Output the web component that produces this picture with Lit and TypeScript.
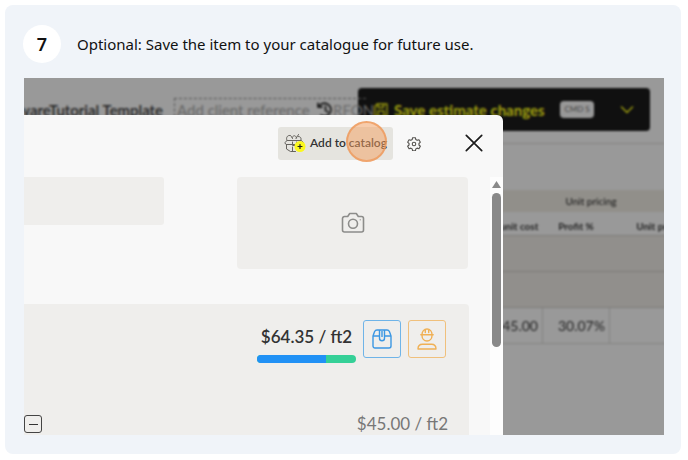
import { LitElement, html, css } from "lit";
import { customElement, property } from "lit/decorators.js";
import { styleMap } from "lit/directives/style-map.js";

const catalogIcon = html`<svg class="icon" width="22" height="20" viewBox="0 0 22 20" fill="none" stroke="#66635e" stroke-width="1" stroke-linejoin="round" stroke-linecap="round" aria-hidden="true">
  <path d="M3 7.500C1.500 5 3.500 2 6 2.500c1.500.3 2 1.500 2.500 3M8 4.500c2-3 4-2 4.500.5M12 5.500l2.500-4M14.500 3.500c2 0 3 1.500 2.500 3.500"/>
  <path d="M3.500 7.500h14l2 2.500-1 1.500H2l-1-1.500z M2.500 11.500v4.500l4 2.500h5 M8.500 9v3.500h4V9 M8.500 14v4"/>
  <circle cx="16" cy="13.500" r="5.500" fill="#fbf81e" stroke="none"/>
  <path d="M16 11.500v4M14 13.500h4" stroke="#222" stroke-width="1.200"/>
</svg>`;

const gearIcon = html`<svg class="icon" width="14" height="14" viewBox="0 0 24 24" fill="none" stroke="#55534f" stroke-width="1.900" stroke-linejoin="round" aria-hidden="true">
  <path d="M9.600 1.500h4.800l.7 3.200 2.300 1.300 3.100-1 2.400 4.200-2.400 2.200v2.600l2.400 2.200-2.400 4.200-3.100-1-2.300 1.300-.7 3.200H9.600l-.7-3.200-2.300-1.300-3.100 1-2.400-4.200 2.400-2.200v-2.600L1.100 9.200 3.500 5l3.100 1 2.300-1.300z" transform="translate(0 -.3)"/>
  <circle cx="12" cy="12" r="3"/>
</svg>`;

const closeIcon = html`<svg class="icon" width="18" height="18" viewBox="0 0 18 18" stroke="#1c1c1c" stroke-width="1.700" stroke-linecap="round" aria-hidden="true">
  <path d="M1.300 1.300l15.400 15.400M16.700 1.300L1.300 16.700"/>
</svg>`;

const cameraIcon = html`<svg class="icon" width="24" height="22" viewBox="0 0 24 22" fill="none" stroke="#8c8c8a" stroke-width="1.600" stroke-linejoin="round" aria-hidden="true">
  <path d="M3.500 4.500h3.200l2-3h6.600l2 3h3.200a2 2 0 0 1 2 2v11.500a2 2 0 0 1-2 2h-17a2 2 0 0 1-2-2V6.500a2 2 0 0 1 2-2z"/>
  <circle cx="12" cy="11.800" r="4.500"/>
  <path d="M18.800 7.700h.8"/>
</svg>`;

const boxIcon = html`<svg class="icon" width="20" height="20" viewBox="0 0 20 20" fill="none" stroke="#3b97e3" stroke-width="1.400" stroke-linejoin="round" aria-hidden="true">
  <path d="M5 1h10c1.500 0 2 .6 2.500 1.700L19 7v10a2 2 0 0 1-2 2H3a2 2 0 0 1-2-2V7l1.500-4.300C3 1.600 3.500 1 5 1z"/>
  <path d="M1 7h6.500M12.500 7H19M7.500 1v8.300a2.500 2.500 0 0 0 5 0V1M10 2v6"/>
</svg>`;

const workerIcon = html`<svg class="icon" width="20" height="22" viewBox="0 0 20 22" fill="none" stroke="#f0b054" stroke-width="1.400" stroke-linejoin="round" stroke-linecap="round" aria-hidden="true">
  <path d="M3.800 6.800h12.400M5 6.500C5 3.500 7 1 10 1s5 2.500 5 5.500M8.300 1.500v3M11.700 1.500v3M5 7.500c0 3 2 5.500 5 5.500s5-2.500 5-5.500"/>
  <path d="M1 21c0-3 1.800-4.800 4.500-4.800h9c2.700 0 4.500 1.800 4.500 4.800z"/>
</svg>`;

const saveIcon = html`<svg class="icon" width="14" height="14" viewBox="0 0 14 14" fill="none" stroke="#9a9a10" stroke-width="1.400" stroke-linejoin="round" aria-hidden="true">
  <path d="M1 3.500L3 1h10v12H1zM4 1v3.500h5.500V1M4 13V8h6v5"/>
</svg>`;

const historyIcon = html`<svg class="icon" width="16" height="16" viewBox="0 0 16 16" fill="none" stroke="#1c1c1c" stroke-width="1.800" stroke-linejoin="round" stroke-linecap="round" aria-hidden="true">
  <path d="M1 1.500V5h3.800M1.500 5A6.500 6.500 0 1 1 4 13.300M8.500 4.500v4l2.500 1.500"/>
</svg>`;

const chevronIcon = html`<svg class="icon" width="14" height="8" viewBox="0 0 14 8" fill="none" stroke="#9a9a10" stroke-width="1.500" stroke-linecap="round" stroke-linejoin="round" aria-hidden="true">
  <path d="M1.500 1L7 6.500 12.500 1"/>
</svg>`;

@customElement("estimate-page")
export class EstimatePage extends LitElement {
  static styles = css`
    :host { display: block; background: #999; color: #222; font-family: Lato, "Open Sans", sans-serif; }
    .icon { display: block; flex: none; }
    .bar { display: flex; align-items: center; height: 66px; box-sizing: border-box; padding: 0 14px 2px 0; border-bottom: 1px solid #858380; }
    .name { display: flex; justify-content: flex-end; width: 139px; flex: none; margin: 0 11px 0 0; overflow: hidden; white-space: nowrap; font-size: 15px; line-height: 20px; font-weight: 600; }
    .ref { display: flex; align-items: center; flex: 1 1 auto; min-width: 0; height: 24px; box-sizing: border-box; border: 1px dashed #555; border-right: 0; position: relative; z-index: 1; }
    .ref input { width: 142px; flex: none; box-sizing: border-box; border: 0; padding: 0 0 0 2px; background: none; font: 15px/20px Lato, sans-serif; color: #666; }
    .ref input::placeholder { color: #666; opacity: 1; }
    .code { font-size: 15px; line-height: 20px; color: #6c6c6c; }
    .save { display: flex; align-items: center; width: 292px; flex: none; height: 43px; box-sizing: border-box; margin-left: -8px; padding: 0 16px; border: 0; border-radius: 4px; background: #101010; color: #a3a310; font: 700 15px/20px Lato, sans-serif; white-space: nowrap; }
    .label { margin-left: 6px; }
    .save kbd { margin-left: auto; width: 34px; height: 17px; border-radius: 4px; background: #989898; color: #444; font: 8px/17px Lato, sans-serif; text-align: center; }
    .more { margin-left: 26px; display: flex; }
    table { width: calc(100% + 43px); margin-top: 46px; table-layout: fixed; border-collapse: collapse; white-space: nowrap; }
    th, td { box-sizing: border-box; padding: 0; }
    .cost { width: 67px; }
    .price { width: 97px; }
    .group th { height: 22px; background: #918f8a; font-size: 10px; font-weight: 400; color: #111; }
    .heads th { height: 23px; padding-top: 5px; font-size: 10px; font-weight: 700; border-bottom: 1px solid #7d7b78; }
    .heads .right { text-align: right; padding-right: 4px; }
    .band td { height: 36px; background: #918f8c; border-bottom: 1px solid #7d7b78; }
    .values td { height: 36px; text-align: right; padding-right: 4px; font-size: 14px; border: 1px solid #838381; }
  `;
  render() {
    return html`
      <header class="bar">
        <h2 class="name">wareTutorial Template</h2>
        <div class="ref">
          <input aria-label="Client reference" placeholder="Add client reference" />
          ${historyIcon}<span class="code">RFON</span>
        </div>
        <button class="save" type="button">
          ${saveIcon}<span class="label">Save estimate changes</span><kbd>CMD S</kbd><span class="more">${chevronIcon}</span>
        </button>
      </header>
      <table>
        <colgroup><col /><col class="cost" /><col class="cost" /><col class="price" /></colgroup>
        <thead>
          <tr class="group"><th></th><th colspan="3">Unit pricing</th></tr>
          <tr class="heads"><th></th><th class="right">unit cost</th><th>Profit %</th><th>Unit price</th></tr>
        </thead>
        <tbody>
          <tr class="band"><td colspan="4"></td></tr>
          <tr class="band"><td colspan="4"></td></tr>
          <tr class="values"><td></td><td>45.00</td><td>30.07%</td><td></td></tr>
        </tbody>
      </table>
    `;
  }
}

@customElement("item-dialog")
export class ItemDialog extends LitElement {
  @property({ type: Number }) materialShare = 70;

  static styles = css`
    :host { display: flex; flex-direction: column; overflow: hidden; background: #f8f8f8; border-top-right-radius: 6px; color: #333; font-family: Lato, "Open Sans", sans-serif; }
    button { display: flex; align-items: center; justify-content: center; padding: 0; border: 0; background: none; color: inherit; font-family: inherit; }
    .icon { display: block; flex: none; }
    .tools { display: flex; align-items: center; justify-content: flex-end; flex: none; height: 62px; box-sizing: border-box; padding: 0 20px 6px 0; }
    .add { position: relative; gap: 4px; width: 115px; height: 33px; border-radius: 3px; background: #e5e4df; font-size: 12px; line-height: 16px; font-weight: 600; white-space: nowrap; }
    .spot { position: absolute; right: 6px; top: -6px; width: 41px; height: 41px; box-sizing: border-box; border: 2px solid rgba(238, 148, 84, 0.7); border-radius: 50%; background: rgba(246, 160, 96, 0.5); }
    .gear { margin: 2px 44px 0 14px; }
    .main { display: flex; flex: 1; min-height: 0; }
    .body { flex: 1; min-width: 0; overflow: hidden; padding-right: 21px; }
    .fields { display: flex; justify-content: space-between; align-items: flex-start; padding-right: 1px; }
    .field { width: 140px; height: 48px; box-sizing: border-box; padding: 0 12px; border: 0; border-radius: 0 3px 3px 0; background: #efeeec; }
    .photo { width: 231px; height: 92px; border-radius: 4px; background: #efeeec; }
    .panel { display: flex; flex-direction: column; justify-content: space-between; height: 131px; box-sizing: border-box; margin-top: 35px; padding: 16px 23px 0 0; border-top-right-radius: 4px; background: #efeeec; }
    .total { display: flex; justify-content: flex-end; gap: 7px; }
    .sum { width: 99px; text-align: center; }
    .amount { margin: 7px 0 8px; font-size: 17px; line-height: 20px; font-weight: 600; white-space: nowrap; }
    .meter { display: flex; height: 8px; border-radius: 4px; overflow: hidden; background: #35d097; }
    .part { background: #2191f5; }
    .kind { width: 38px; height: 38px; border: 1px solid #6fb4e8; border-radius: 3px; }
    .labor { border-color: #f0c07c; }
    .line { display: flex; align-items: center; justify-content: space-between; height: 22px; margin-right: -2px; }
    .fold { width: 18px; height: 18px; border: 1px solid #444; border-radius: 3px; }
    .dash { width: 9px; height: 1px; background: #333; }
    .each { font-size: 17px; line-height: 22px; color: #777; white-space: nowrap; }
    .track { width: 13px; flex: none; display: flex; flex-direction: column; align-items: center; gap: 5px; padding-top: 4px; box-sizing: border-box; background: #fdfdfd; }
    .thumb { width: 9px; height: 154px; border-radius: 5px; background: #8a8a8a; }
  `;
  render() {
    return html`
      <header class="tools">
        <button class="add" type="button">${catalogIcon}<span>Add to catalog</span><span class="spot"></span></button>
        <button class="gear" type="button" aria-label="Settings">${gearIcon}</button>
        <button type="button" aria-label="Close">${closeIcon}</button>
      </header>
      <div class="main">
        <div class="body">
          <div class="fields">
            <input class="field" aria-label="Item name" />
            <button class="photo" type="button" aria-label="Add photo">${cameraIcon}</button>
          </div>
          <section class="panel">
            <div class="total">
              <div class="sum">
                <p class="amount">$64.35 / ft2</p>
                <div class="meter"><div class="part" style=${styleMap({ width: `${this.materialShare}%` })}></div></div>
              </div>
              <button class="kind" type="button" aria-label="Materials">${boxIcon}</button>
              <button class="kind labor" type="button" aria-label="Labor">${workerIcon}</button>
            </div>
            <div class="line">
              <button class="fold" type="button" aria-label="Collapse"><span class="dash"></span></button>
              <span class="each">$45.00 / ft2</span>
            </div>
          </section>
        </div>
        <div class="track">
          <svg class="icon" width="9" height="7" viewBox="0 0 9 7" aria-hidden="true"><path d="M4.500 0L9 7H0z" fill="#8a8a8a"/></svg>
          <div class="thumb"></div>
        </div>
      </div>
    `;
  }
}

@customElement("app-root")
export class AppRoot extends LitElement {
  static styles = css`
    :host { display: block; padding: 5px 7px 6px 5px; background: #fff; font-family: "Noto Sans", sans-serif; color: #111; }
    .card { padding: 20px 17px 19px 19px; border-radius: 8px; background: #f0f4f9; }
    .step { display: flex; align-items: center; gap: 16px; margin-bottom: 15px; }
    .number { display: flex; align-items: center; justify-content: center; flex: none; width: 38px; height: 38px; margin-left: -1px; border-radius: 50%; background: #fff; font-size: 18px; line-height: 24px; font-weight: 600; }
    .title { margin: 0; font-size: 15px; line-height: 22px; font-weight: 400; }
    .shot { position: relative; height: 357px; overflow: hidden; background: #999; }
    .page { filter: blur(1px); }
    .dialog { position: absolute; left: 0; right: 161px; top: 37px; bottom: 0; }
  `;
  render() {
    return html`
      <article class="card">
        <header class="step">
          <span class="number">7</span>
          <h1 class="title">Optional: Save the item to your catalogue for future use.</h1>
        </header>
        <div class="shot">
          <estimate-page class="page"></estimate-page>
          <item-dialog class="dialog"></item-dialog>
        </div>
      </article>
    `;
  }
}
